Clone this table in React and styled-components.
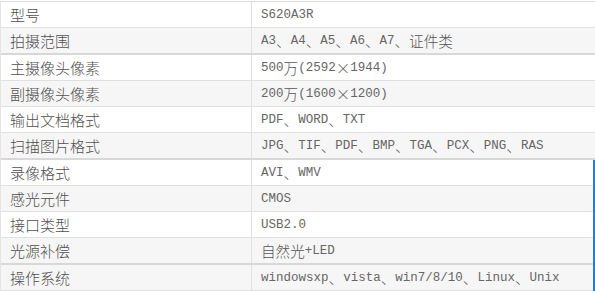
import React from "react";
import styled, { createGlobalStyle } from "styled-components";

const Global = createGlobalStyle`
  html, body { margin: 0; padding: 0; background: #fff; }
  body { width: 595px; height: 291px; overflow: hidden; }
`;

const Wrap = styled.div`
  position: relative;
  width: 595px;
  height: 291px;
  padding-top: 1px;
  box-sizing: border-box;
`;

const Table = styled.div`
  width: 595px;
  border-top: 1px solid #dedede;
  border-left: 1px solid #e4e4e4;
  box-sizing: border-box;
`;

const Row = styled.div`
  display: grid;
  grid-template-columns: 251px 1fr;
  height: 25px;
  background: ${(p) => (p.$shade ? "#f6f6f6" : "#ffffff")};
  border-bottom: ${(p) => (p.$thick ? "2px solid #d8d8d8" : "1px solid #e0e0e0")};
`;

const Label = styled.div`
  display: flex;
  align-items: center;
  padding-left: 9px;
  border-right: 1px solid #e0e0e0;
  font-family: "Noto Sans CJK SC", "Noto Sans", sans-serif;
  font-size: 15px;
  font-weight: 300;
  color: #505050;
  white-space: nowrap;
`;

const Value = styled.div`
  display: flex;
  align-items: center;
  padding-left: 9px;
  font-family: "Liberation Mono", "Noto Sans CJK SC", monospace;
  font-size: 12.5px;
  color: #666;
  white-space: pre;
`;

const Cjk = styled.span`
  font-family: "Noto Sans CJK SC", sans-serif;
  font-size: 14.6px;
  font-weight: 300;
  color: #555;
`;

const Accent = styled.div`
  position: absolute;
  right: 0;
  top: 160px;
  bottom: 0;
  width: 2px;
  background: #3379c9;
`;

const rows = [
  ["型号", "S620A3R"],
  ["拍摄范围", "A3、A4、A5、A6、A7、证件类"],
  ["主摄像头像素", "500万(2592×1944)"],
  ["副摄像头像素", "200万(1600×1200)"],
  ["输出文档格式", "PDF、WORD、TXT"],
  ["扫描图片格式", "JPG、TIF、PDF、BMP、TGA、PCX、PNG、RAS"],
  ["录像格式", "AVI、WMV"],
  ["感光元件", "CMOS"],
  ["接口类型", "USB2.0"],
  ["光源补偿", "自然光+LED"],
  ["操作系统", "windowsxp、vista、win7/8/10、Linux、Unix"],
];

const shaded = [1, 3, 5, 7, 9, 10];
const thick = [1, 5, 9];

function renderValue(text) {
  const parts = text.split(/([\u3000-\u9fff\uff00-\uffef×]+)/);
  return parts.map((p, i) =>
    /^[\u3000-\u9fff\uff00-\uffef×]+$/.test(p) ? <Cjk key={i}>{p}</Cjk> : p
  );
}

export default function App() {
  return (
    <Wrap>
      <Global />
      <Table>
        {rows.map(([k, v], i) => (
          <Row key={k} $shade={shaded.includes(i)} $thick={thick.includes(i)}>
            <Label>{k}</Label>
            <Value>{renderValue(v)}</Value>
          </Row>
        ))}
      </Table>
      <Accent />
    </Wrap>
  );
}
